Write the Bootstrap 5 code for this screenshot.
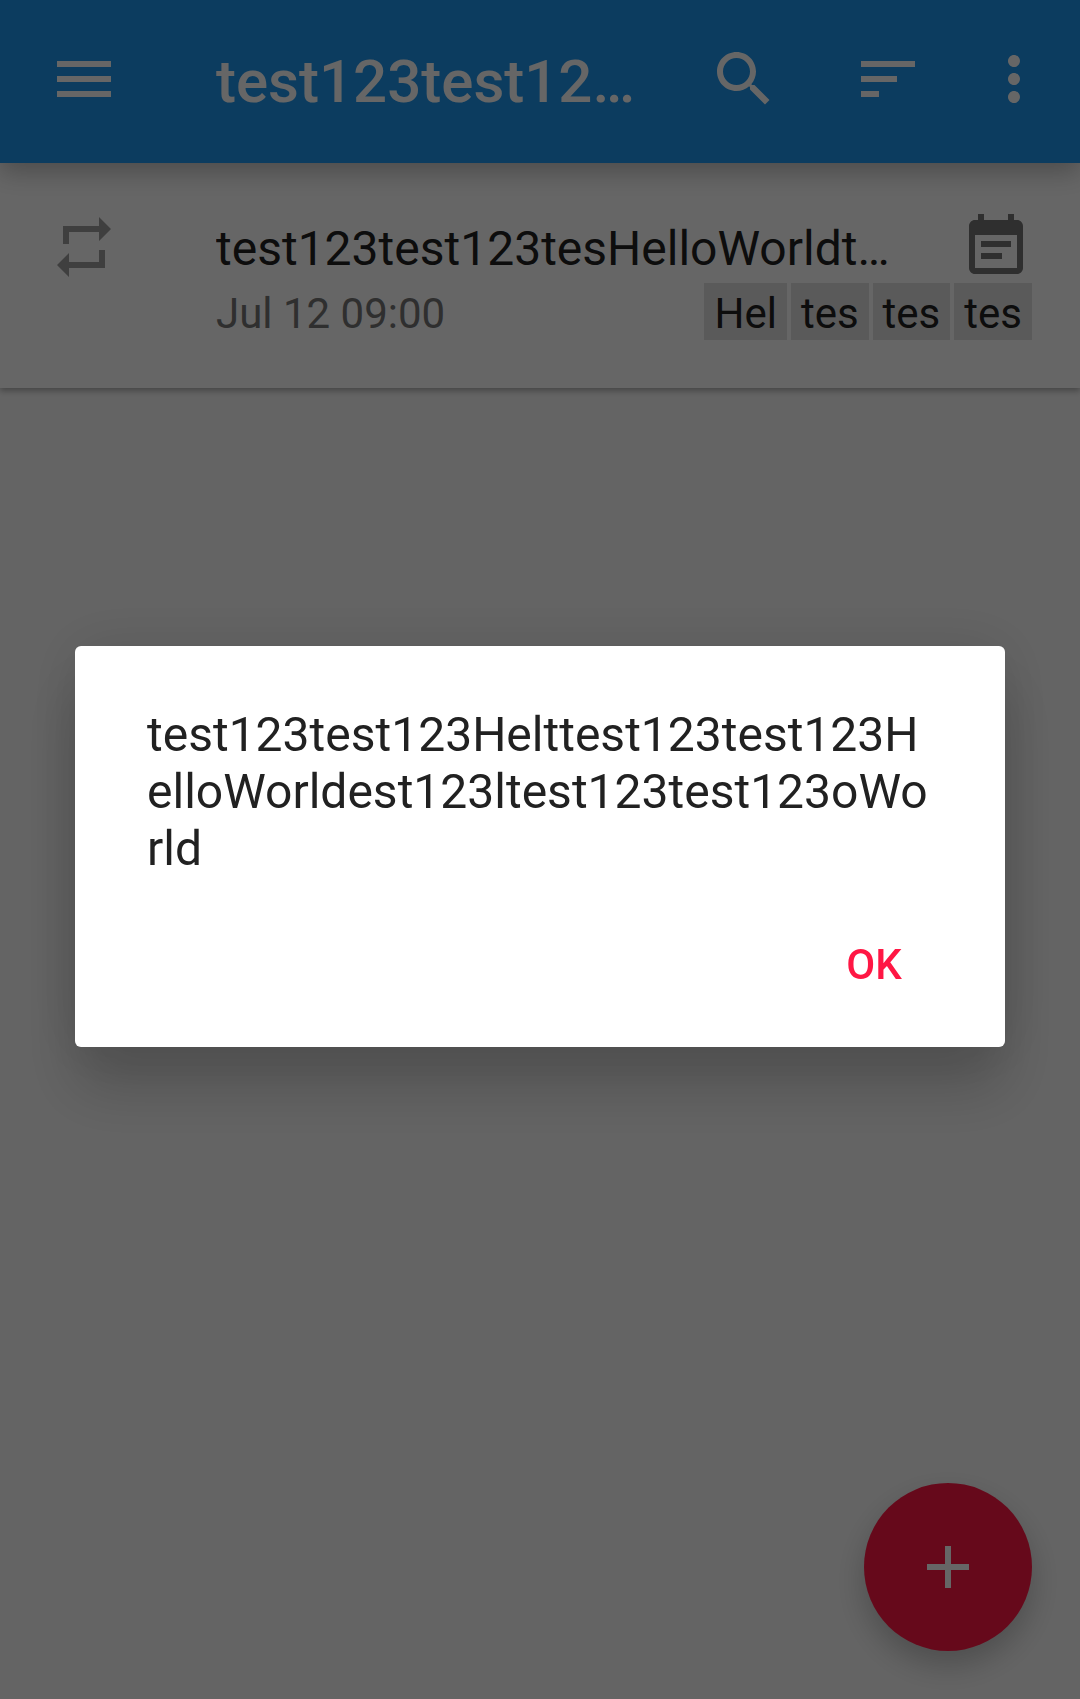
<!DOCTYPE html>
<html lang="en">
<head>
<meta charset="utf-8">
<meta name="viewport" content="width=device-width, initial-scale=1">
<title>Notes</title>
<link rel="stylesheet" href="https://cdn.jsdelivr.net/npm/bootstrap@5.3.0/dist/css/bootstrap.min.css">
<style>
  :root { --accent: #ff1744; --ink: #212121; --ink-soft: #757575; --ink-hint: #9e9e9e; }
  body { font-family: Roboto, "Liberation Sans", sans-serif; background: #fafafa; color: var(--ink); }
  .glyph { width: 72px; height: 72px; display: block; fill: currentColor; flex: none; }
  .app-bar { background: #1f96ee; color: #fff; min-height: 163px; box-shadow: 0 9px 24px rgba(0,0,0,.26); z-index: 2; }
  .app-title { font-size: 60px; line-height: 70px; font-weight: 500; margin-right: 12px; }
  .bar-btn { border: 0; border-radius: 0; padding: 43px 36px 48px; color: inherit; }
  .bar-btn.menu-btn { padding-left: 48px; padding-right: 96px; }
  .bar-btn.more-btn { padding-left: 18px; padding-right: 30px; }
  .note-item { background: #fff; padding: 48px; box-shadow: 0 3px 6px rgba(0,0,0,.3); }
  .note-icon { margin-right: 96px; color: var(--ink-hint); }
  .note-head { gap: 60px; }
  .note-title { font-size: 48px; line-height: 57px; font-weight: 400; padding-top: 2px; }
  .note-date, .note-tag { font-size: 42px; line-height: 49px; padding: 6px 0 2px; }
  .note-date, .note-cal { color: var(--ink-soft); }
  .note-tags { gap: 4px; }
  .note-tag { background: #e0e0e0; padding-left: 10px; padding-right: 10px; }
  .fab { width: 168px; height: 168px; right: 48px; bottom: 48px; background: var(--accent); color: #fff; border: 0; box-shadow: 0 14px 30px rgba(0,0,0,.22); }
  .modal-backdrop { --bs-backdrop-opacity: .6; }
  .modal-dialog.note-dialog { max-width: none; margin: 0 75px; min-height: calc(100% - 6px); }
  .note-dialog .modal-content { border: 0; border-radius: 6px; box-shadow: 0 42px 60px rgba(0,0,0,.18), 0 0 60px rgba(0,0,0,.12); color: var(--ink); }
  .note-dialog .modal-body { padding: 60px 72px 33px; font-size: 48px; line-height: 57px; }
  .note-dialog .modal-footer { border: 0; padding: 0 35px 29px; }
  .ok-btn { min-width: 192px; height: 108px; margin: 0; padding: 0; border: 0; font-size: 42px; font-weight: 500; color: var(--accent); }
</style>
<script src="https://cdn.jsdelivr.net/npm/bootstrap@5.3.0/dist/js/bootstrap.bundle.min.js"></script>
</head>
<body class="min-vh-100">

<header class="app-bar d-flex align-items-center position-relative">
  <button type="button" class="btn bar-btn menu-btn" aria-label="Menu">
    <svg class="glyph" viewBox="0 0 24 24"><path d="M3 18h18v-2H3v2zm0-5h18v-2H3v2zm0-7v2h18V6H3z"/></svg>
  </button>
  <h1 class="app-title text-truncate flex-grow-1 mb-0">test123test123HelloWorld</h1>
  <button type="button" class="btn bar-btn" aria-label="Search">
    <svg class="glyph" viewBox="0 0 24 24"><path d="M15.5 14h-.79l-.28-.27C15.41 12.59 16 11.11 16 9.5 16 5.91 13.09 3 9.5 3S3 5.91 3 9.5 5.91 16 9.5 16c1.61 0 3.09-.59 4.23-1.57l.27.28v.79l5 4.99L20.49 19l-4.99-5zm-6 0C7.01 14 5 11.99 5 9.5S7.01 5 9.5 5 14 7.01 14 9.5 11.99 14 9.5 14z"/></svg>
  </button>
  <button type="button" class="btn bar-btn" aria-label="Sort">
    <svg class="glyph" viewBox="0 0 24 24"><path d="M3 18h6v-2H3v2zM3 6v2h18V6H3zm0 7h12v-2H3v2z"/></svg>
  </button>
  <button type="button" class="btn bar-btn more-btn" aria-label="More options">
    <svg class="glyph" viewBox="0 0 24 24"><path d="M12 8c1.1 0 2-.9 2-2s-.9-2-2-2-2 .9-2 2 .9 2 2 2zm0 2c-1.1 0-2 .9-2 2s.9 2 2 2 2-.9 2-2-.9-2-2-2zm0 6c-1.1 0-2 .9-2 2s.9 2 2 2 2-.9 2-2-.9-2-2-2z"/></svg>
  </button>
</header>

<main>
  <article class="note-item d-flex align-items-start">
    <svg class="glyph note-icon" viewBox="0 0 24 24" role="img" aria-label="Repeating"><path d="M17 17H7v-3l-4 4 4 4v-3h12v-6h-2M7 7h10v3l4-4-4-4v3H5v6h2V7z"/></svg>
    <div class="flex-grow-1 overflow-hidden">
      <div class="note-head d-flex align-items-center">
        <h2 class="note-title text-truncate flex-grow-1 mb-0">test123test123tesHelloWorldtest123</h2>
        <svg class="glyph note-cal" viewBox="0 0 24 24" role="img" aria-label="Scheduled"><path d="M17 10H7v2h10v-2zm2-7h-1V1h-2v2H8V1H6v2H5c-1.11 0-1.99.9-1.99 2L3 19c0 1.1.89 2 2 2h14c1.1 0 2-.9 2-2V5c0-1.1-.9-2-2-2zm0 16H5V8h14v11zm-5-5H7v2h7v-2z"/></svg>
      </div>
      <div class="d-flex justify-content-between">
        <time class="note-date">Jul 12 09:00</time>
        <div class="note-tags d-flex">
          <span class="note-tag">Hel</span>
          <span class="note-tag">tes</span>
          <span class="note-tag">tes</span>
          <span class="note-tag">tes</span>
        </div>
      </div>
    </div>
  </article>
</main>

<button type="button" class="btn fab rounded-circle position-fixed d-flex align-items-center justify-content-center" aria-label="Add note">
  <svg class="glyph" viewBox="0 0 24 24"><path d="M19 13h-6v6h-2v-6H5v-2h6V5h2v6h6v2z"/></svg>
</button>

<div class="modal-backdrop show"></div>
<div class="modal d-block" role="dialog" aria-modal="true" aria-describedby="message">
  <div class="modal-dialog modal-dialog-centered note-dialog">
    <div class="modal-content">
      <div class="modal-body text-break" id="message">test123test123Helttest123test123HelloWorldest123ltest123test123oWorld</div>
      <div class="modal-footer justify-content-end">
        <button type="button" class="btn ok-btn">OK</button>
      </div>
    </div>
  </div>
</div>
</body>
</html>
